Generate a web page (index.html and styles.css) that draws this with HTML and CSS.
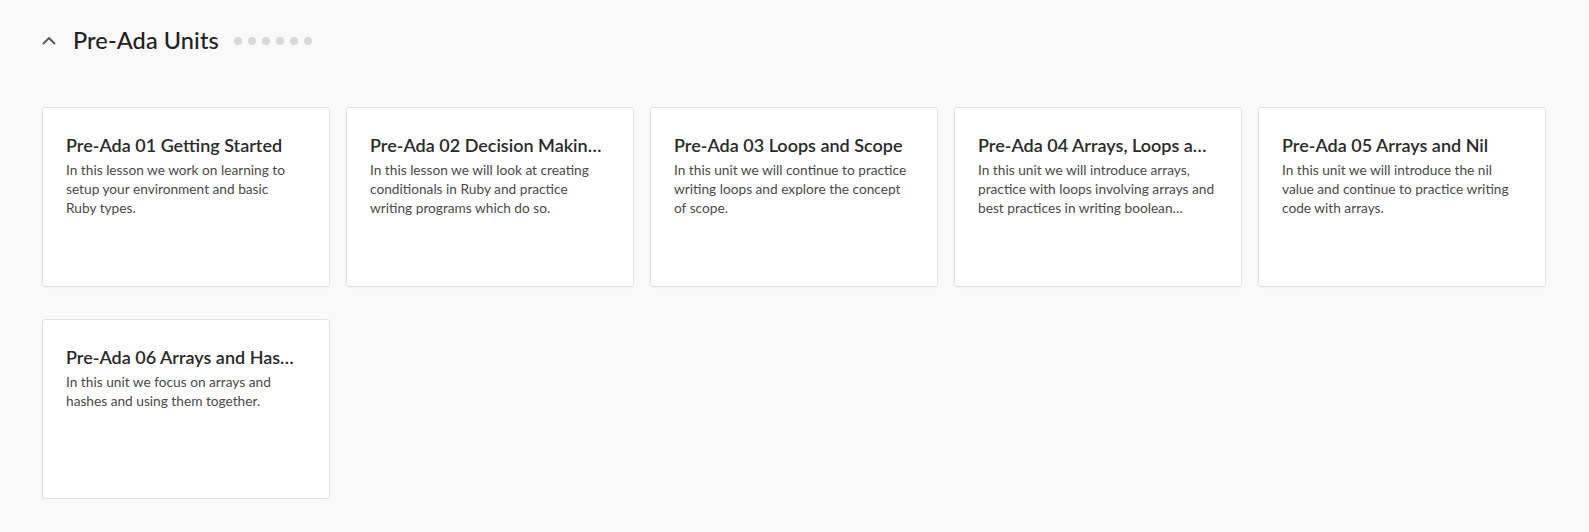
FILE: index.html
```html
<!DOCTYPE html>
<html lang="en">
<head>
<meta charset="utf-8">
<title>Pre-Ada Units</title>
<link rel="stylesheet" href="styles.css">
</head>
<body>
<section class="section">
  <header class="section-head">
    <button class="toggle" aria-label="Collapse">
      <svg width="14" height="9" viewBox="0 0 14 9"><path d="M1.5 7.5 L7 2 L12.5 7.5" fill="none" stroke="#555" stroke-width="1.8" stroke-linecap="round" stroke-linejoin="round"/></svg>
    </button>
    <h2 class="section-title">Pre-Ada Units</h2>
    <div class="dots">
      <span class="dot"></span><span class="dot"></span><span class="dot"></span><span class="dot"></span><span class="dot"></span><span class="dot"></span>
    </div>
  </header>
  <div class="cards">
    <article class="card">
      <h3 class="card-title">Pre-Ada 01 Getting Started</h3>
      <p class="card-desc">In this lesson we work on learning to setup your environment and basic Ruby&nbsp;types.</p>
    </article>
    <article class="card">
      <h3 class="card-title">Pre-Ada 02 Decision Makin…</h3>
      <p class="card-desc">In this lesson we will look at creating conditionals in Ruby and practice writing programs which do so.</p>
    </article>
    <article class="card">
      <h3 class="card-title">Pre-Ada 03 Loops and Scope</h3>
      <p class="card-desc">In this unit we will continue to practice writing loops and explore the concept of scope.</p>
    </article>
    <article class="card">
      <h3 class="card-title">Pre-Ada 04 Arrays, Loops a…</h3>
      <p class="card-desc">In this unit we will introduce arrays, practice with loops involving arrays and best practices in writing boolean…</p>
    </article>
    <article class="card">
      <h3 class="card-title">Pre-Ada 05 Arrays and Nil</h3>
      <p class="card-desc">In this unit we will introduce the nil value and continue to practice writing code with arrays.</p>
    </article>
    <article class="card">
      <h3 class="card-title">Pre-Ada 06 Arrays and Has…</h3>
      <p class="card-desc">In this unit we focus on arrays and hashes and using them together.</p>
    </article>
  </div>
</section>
</body>
</html>
```

FILE: styles.css
```css
* { box-sizing: border-box; }
html, body {
  margin: 0;
  padding: 0;
  background: #f9f9f9;
  font-family: "Lato", "Noto Sans", sans-serif;
  color: #2b2b2b;
}
.section {
  padding: 24px 42px 0 42px;
}
.section-head {
  display: flex;
  align-items: center;
  height: 32px;
}
.toggle {
  border: 0;
  background: none;
  padding: 0;
  width: 14px;
  height: 14px;
  display: flex;
  align-items: center;
  justify-content: center;
  margin-right: 17px;
  cursor: pointer;
}
.section-title {
  margin: 0;
  font-size: 23.5px;
  font-weight: 500;
  color: #222;
  letter-spacing: 0.1px;
}
.dots {
  display: flex;
  gap: 6px;
  margin-left: 15px;
  margin-top: 2px;
}
.dot {
  width: 8px;
  height: 8px;
  border-radius: 50%;
  background: #d8d8d8;
}
.cards {
  display: grid;
  grid-template-columns: repeat(5, 288px);
  column-gap: 16px;
  row-gap: 32px;
  margin-top: 51px;
}
.card {
  height: 180px;
  background: #fff;
  border: 1px solid #e2e2e2;
  border-radius: 3px;
  box-shadow: 0 1px 2px rgba(0,0,0,0.03);
  padding: 25px 22px 25px 23px;
}
.card-title {
  margin: 0 0 3px 0;
  font-size: 18px;
  line-height: 24px;
  font-weight: 600;
  color: #2a2a2a;
  white-space: nowrap;
  overflow: hidden;
}
.card-desc {
  margin: 0;
  font-size: 13.7px;
  line-height: 19px;
  color: #4a4a4a;
}
```
